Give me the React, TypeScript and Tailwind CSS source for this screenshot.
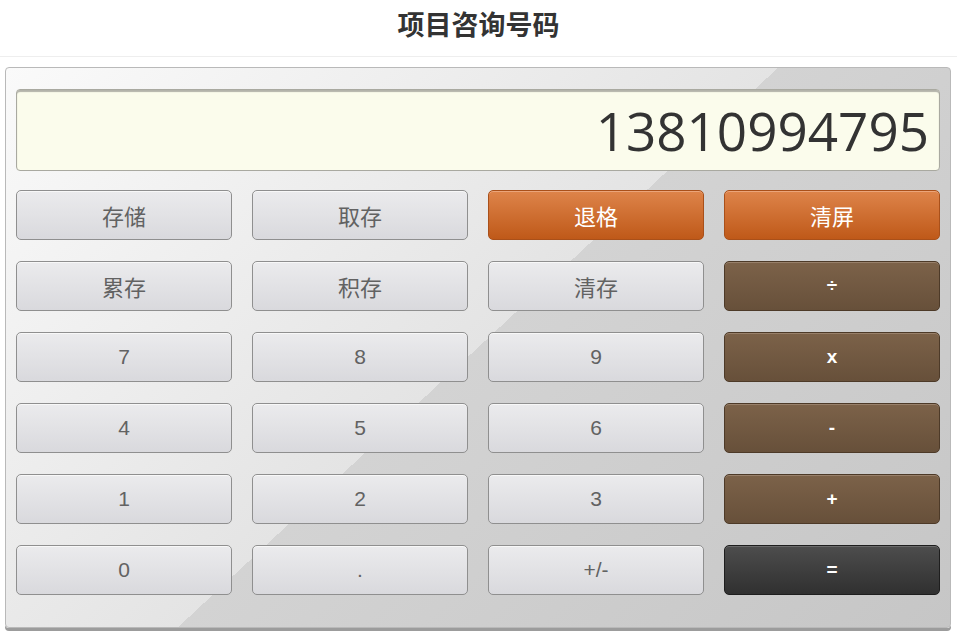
import React from "react";

type Kind = "gray" | "orange" | "brown" | "dark";

interface Key {
    label: string;
    kind: Kind;
}

const rows: Key[][] = [
    [{ label: "存储", kind: "gray" }, { label: "取存", kind: "gray" }, { label: "退格", kind: "orange" }, { label: "清屏", kind: "orange" }],
    [{ label: "累存", kind: "gray" }, { label: "积存", kind: "gray" }, { label: "清存", kind: "gray" }, { label: "÷", kind: "brown" }],
    [{ label: "7", kind: "gray" }, { label: "8", kind: "gray" }, { label: "9", kind: "gray" }, { label: "x", kind: "brown" }],
    [{ label: "4", kind: "gray" }, { label: "5", kind: "gray" }, { label: "6", kind: "gray" }, { label: "-", kind: "brown" }],
    [{ label: "1", kind: "gray" }, { label: "2", kind: "gray" }, { label: "3", kind: "gray" }, { label: "+", kind: "brown" }],
    [{ label: "0", kind: "gray" }, { label: ".", kind: "gray" }, { label: "+/-", kind: "gray" }, { label: "=", kind: "dark" }],
];

const kindClass: Record<Kind, string> = {
    gray: "bg-[linear-gradient(#ebebed,#d9d9dd)] border-[#8f8f8f] text-[#626262] shadow-[inset_0_1px_0_#f8f8f8]",
    orange: "bg-[linear-gradient(#de844a,#bf5919)] border-[#a9501a] text-white shadow-[inset_0_1px_0_#eba57a]",
    brown: "bg-[linear-gradient(#7c6249,#67503a)] border-[#4d3a28] text-white font-bold shadow-[inset_0_1px_0_#98806a]",
    dark: "bg-[linear-gradient(#4d4d4d,#303030)] border-[#1e1e1e] text-white font-bold shadow-[inset_0_1px_0_#6a6a6a]",
};

function CalcKey({ k }: { k: Key }) {
    // chinese labels are bigger than the digits / operators
    const isCjk = /[\u4e00-\u9fff]/.test(k.label);
    const size = isCjk
        ? "text-[22px] font-['Noto_Sans_CJK_SC',sans-serif]"
        : k.kind === "gray"
            ? "text-[21px] font-['Liberation_Sans',sans-serif]"
            : "text-[19px] font-['Liberation_Sans',sans-serif]";
    return (
        <button className={`h-[50px] rounded-[5px] border flex items-center justify-center ${size} ${kindClass[k.kind]}`}>
            {k.label}
        </button>
    );
}

export default function App() {
    return (
        <div className="w-[957px] h-[632px] bg-white overflow-hidden font-['Open_Sans','Noto_Sans_CJK_SC',sans-serif]">
            <div className="h-[57px] border-b border-[#eeeeee] flex justify-center pt-[6px]">
                <h1 className="text-[27px] leading-[36px] font-bold text-[#333333] font-['Noto_Sans_CJK_SC',sans-serif]">
                    项目咨询号码
                </h1>
            </div>

            <div className="mt-[10px] mx-[5px] w-[946px] h-[561px] rounded-[4px] border border-[#b9b9b9] shadow-[0_3px_0_#9c9c9c] bg-[linear-gradient(137deg,#fafafa_0%,#e4e4e4_50%,#d3d3d3_50%,#c6c6c6_100%)] px-[10px] pt-[21px]">
                <div className="h-[82px] rounded-[4px] border border-[#a9a9a0] bg-[#fbfcec] shadow-[inset_0_2px_1px_#b3b3aa] flex items-center justify-end pr-[10px]">
                    <span className="text-[53px] text-[#333333] font-['Open_Sans',sans-serif] leading-none">
                        13810994795
                    </span>
                </div>

                <div className="mt-[19px] grid grid-cols-4 gap-x-[20px] gap-y-[21px]">
                    {rows.map((row, i) =>
                        row.map((k, j) => <CalcKey key={`${i}-${j}`} k={k} />)
                    )}
                </div>
            </div>
        </div>
    );
}
